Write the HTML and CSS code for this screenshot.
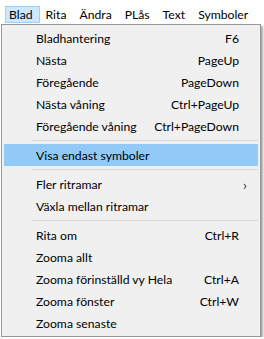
FILE: index.html
```html
<!DOCTYPE html>
<html lang="sv">
<head>
<meta charset="UTF-8">
<title>Blad</title>
<link rel="stylesheet" href="styles.css">
</head>
<body>
<div class="menubar">
    <span class="menubar-item active">Blad</span>
    <span class="menubar-item">Rita</span>
    <span class="menubar-item">Ändra</span>
    <span class="menubar-item">PLås</span>
    <span class="menubar-item">Text</span>
    <span class="menubar-item">Symboler</span>
</div>

<div class="menu">
    <div class="menu-item"><span>Bladhantering</span><span class="shortcut">F6</span></div>
    <div class="menu-item"><span>Nästa</span><span class="shortcut">PageUp</span></div>
    <div class="menu-item"><span>Föregående</span><span class="shortcut">PageDown</span></div>
    <div class="menu-item"><span>Nästa våning</span><span class="shortcut">Ctrl+PageUp</span></div>
    <div class="menu-item"><span>Föregående våning</span><span class="shortcut">Ctrl+PageDown</span></div>
    <div class="separator"></div>
    <div class="menu-item selected"><span>Visa endast symboler</span></div>
    <div class="separator"></div>
    <div class="menu-item"><span>Fler ritramar</span><span class="arrow">&#x203A;</span></div>
    <div class="menu-item"><span>Växla mellan ritramar</span></div>
    <div class="separator"></div>
    <div class="menu-item"><span>Rita om</span><span class="shortcut">Ctrl+R</span></div>
    <div class="menu-item"><span>Zooma allt</span></div>
    <div class="menu-item"><span>Zooma förinställd vy Hela</span><span class="shortcut">Ctrl+A</span></div>
    <div class="menu-item"><span>Zooma fönster</span><span class="shortcut">Ctrl+W</span></div>
    <div class="menu-item"><span>Zooma senaste</span></div>
</div>
</body>
</html>
```

FILE: styles.css
```css
body {
    margin: 0;
    padding: 0;
    background-color: #ffffff;
    font-family: 'Segoe UI', Lato, sans-serif;
    font-size: 12.2px;
    color: #000000;
}
.menubar {
    display: flex;
    height: 24px;
    padding: 6px 0 0 5px;
    box-sizing: border-box;
    background-color: #ffffff;
}
.menubar-item {
    height: 17px;
    line-height: 15px;
    padding: 0 6px 0 3px;
    margin-right: 2px;
    box-sizing: border-box;
    border: 1px solid transparent;
    white-space: nowrap;
}
.menubar-item.active {
    background-color: #cce8ff;
    border-color: #99d1ff;
}
.menu {
    width: 260px;
    margin-left: 1px;
    padding: 2px;
    box-sizing: border-box;
    background-color: #f0f0f0;
    border: 1px solid #979797;
    box-shadow: 2px 2px 2px rgba(0, 0, 0, 0.35);
}
.menu-item {
    display: flex;
    justify-content: space-between;
    align-items: center;
    height: 22px;
    padding: 0 19px 0 32px;
}
.menu-item.selected {
    background-color: #91c9f7;
}
.shortcut {
    white-space: nowrap;
}
.arrow {
    font-size: 14px;
    margin-right: -8px;
    color: #333333;
}
.separator {
    height: 1px;
    margin: 3px 0 3px 28px;
    background-color: #d7d7d7;
}
```
